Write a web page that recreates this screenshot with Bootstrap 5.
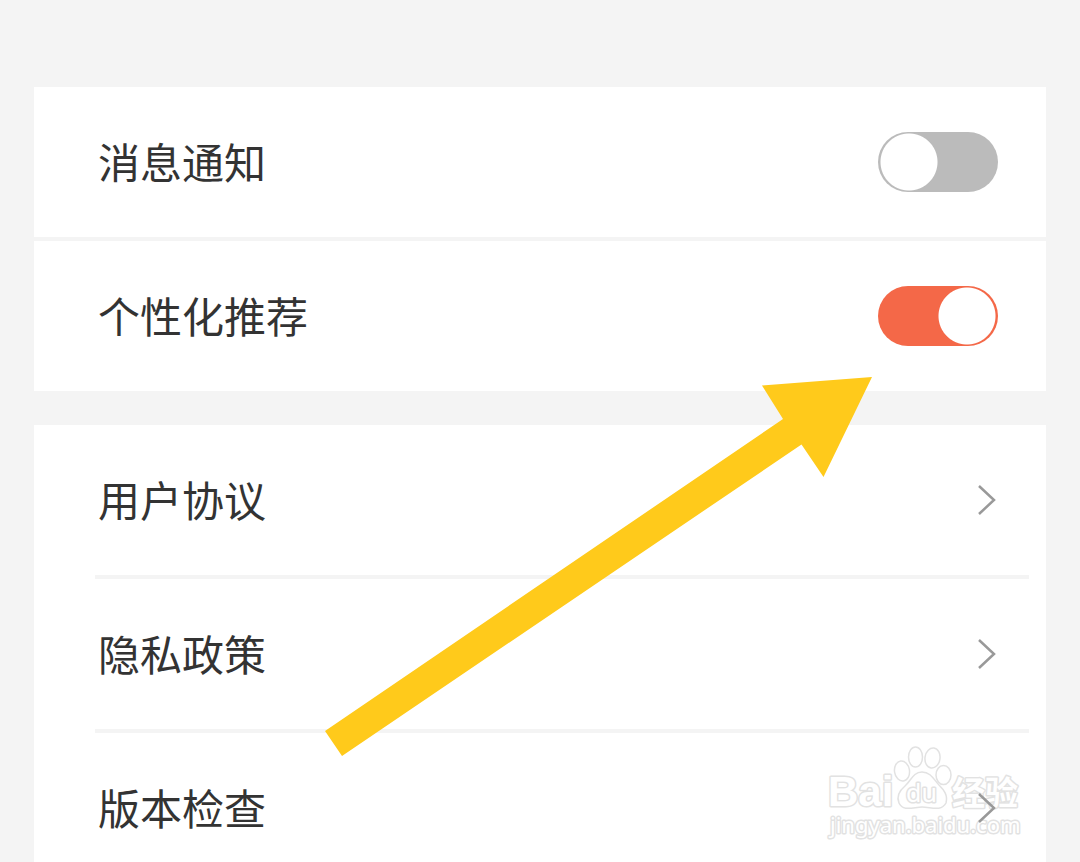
<!DOCTYPE html>
<html lang="zh-CN">
<head>
<meta charset="utf-8">
<meta name="viewport" content="width=device-width, initial-scale=1">
<title>设置</title>
<link href="https://cdn.jsdelivr.net/npm/bootstrap@5.3.0/dist/css/bootstrap.min.css" rel="stylesheet">
<style>
  body { background: #f4f4f4; color: #333; font-family: "Noto Sans CJK SC", sans-serif; font-size: 42px; line-height: 60px; }
  .settings { padding: 87px 34px 0; gap: 34px; }
  .group { background: #fff; }
  .entry { min-height: 150px; padding: 0 48px 2px 64px; color: #333; }
  .split { border-top: 4px solid #f4f4f4; }
  .split-inset { height: 4px; margin: 0 17px 0 61px; background: #f4f4f4; }
  .toggle.form-check-input {
    width: 120px; height: 60px; margin: 2px 0 0; float: none; border: 0; border-radius: 30px; flex: none;
    background: #bbb radial-gradient(circle, #fff 28px, transparent 29px) 2px center / 58px 60px no-repeat;
  }
  .toggle.form-check-input:checked { background-color: #f46848; background-position: right 2px center; }
  .chevron { margin: 2px 2px 0 0; z-index: 1; }
  .arrow { left: 320px; top: 370px; pointer-events: none; }
  .watermark { right: 54px; top: 740px; pointer-events: none; }
  .watermark text { paint-order: stroke; stroke-width: 3px; stroke-linejoin: round; }
  .wm-bold { font: bold 42px "Liberation Sans", sans-serif; }
  .wm-du { font: 25px "Noto Sans", sans-serif; }
  .wm-cjk { font: bold 33px "Noto Sans CJK SC", sans-serif; }
  .wm-url { font: 22px "Noto Sans", sans-serif; }
</style>
</head>
<body>
<main class="settings position-relative d-flex flex-column">
  <section class="group">
    <div class="entry d-flex align-items-center justify-content-between">
      <label for="notify">消息通知</label>
      <input class="form-check-input toggle" type="checkbox" role="switch" id="notify">
    </div>
    <div class="split"></div>
    <div class="entry d-flex align-items-center justify-content-between">
      <label for="recommend">个性化推荐</label>
      <input class="form-check-input toggle" type="checkbox" role="switch" id="recommend" checked>
    </div>
  </section>
  <nav class="group" aria-label="协议与版本">
    <a href="#terms" class="entry d-flex align-items-center justify-content-between text-decoration-none">用户协议
      <svg class="chevron" width="18" height="30" fill="none" stroke="#999" stroke-width="2.5" aria-hidden="true"><path d="M1 1 16 15 1 29"/></svg></a>
    <div class="split-inset"></div>
    <a href="#privacy" class="entry d-flex align-items-center justify-content-between text-decoration-none">隐私政策
      <svg class="chevron" width="18" height="30" fill="none" stroke="#999" stroke-width="2.5" aria-hidden="true"><path d="M1 1 16 15 1 29"/></svg></a>
    <div class="split-inset"></div>
    <a href="#version" class="entry d-flex align-items-center justify-content-between text-decoration-none">版本检查
      <svg class="chevron" width="18" height="30" fill="none" stroke="#999" stroke-width="2.5" aria-hidden="true"><path d="M1 1 16 15 1 29"/></svg></a>
  </nav>

  <svg class="arrow position-absolute" width="560" height="390" fill="#ffca1b" aria-hidden="true">
    <path d="M5 361 463 49 442 15.500 552 7 503.500 107 481.500 74.500 22 386Z"/>
  </svg>

  <svg class="watermark position-absolute" width="200" height="104" fill="#fff" stroke="#e2e2e2" stroke-width="1.500">
    <text class="wm-bold" x="2" y="66">Bai</text>
    <g>
      <ellipse cx="76" cy="31" rx="7.500" ry="10" transform="rotate(-8 76 31)"/>
      <ellipse cx="89.500" cy="17" rx="7" ry="10"/>
      <ellipse cx="106.500" cy="18" rx="7.500" ry="10" transform="rotate(8 106.500 18)"/>
      <ellipse cx="117.500" cy="35" rx="7.500" ry="9.500"/>
      <path d="M96 32C87 32 85 41 79 46C73 51 70 56 73 63C77 72 88 67 96 67C105 67 115 72 120 63C122 55 118 50 113 45C108 40 105 32 96 32Z"/>
    </g>
    <text class="wm-du" x="80" y="62">du</text>
    <text class="wm-cjk" x="126" y="65">经验</text>
    <text class="wm-url" x="4" y="93">jingyan.baidu.com</text>
  </svg>
</main>
<script src="https://cdn.jsdelivr.net/npm/bootstrap@5.3.0/dist/js/bootstrap.bundle.min.js"></script>
</body>
</html>
